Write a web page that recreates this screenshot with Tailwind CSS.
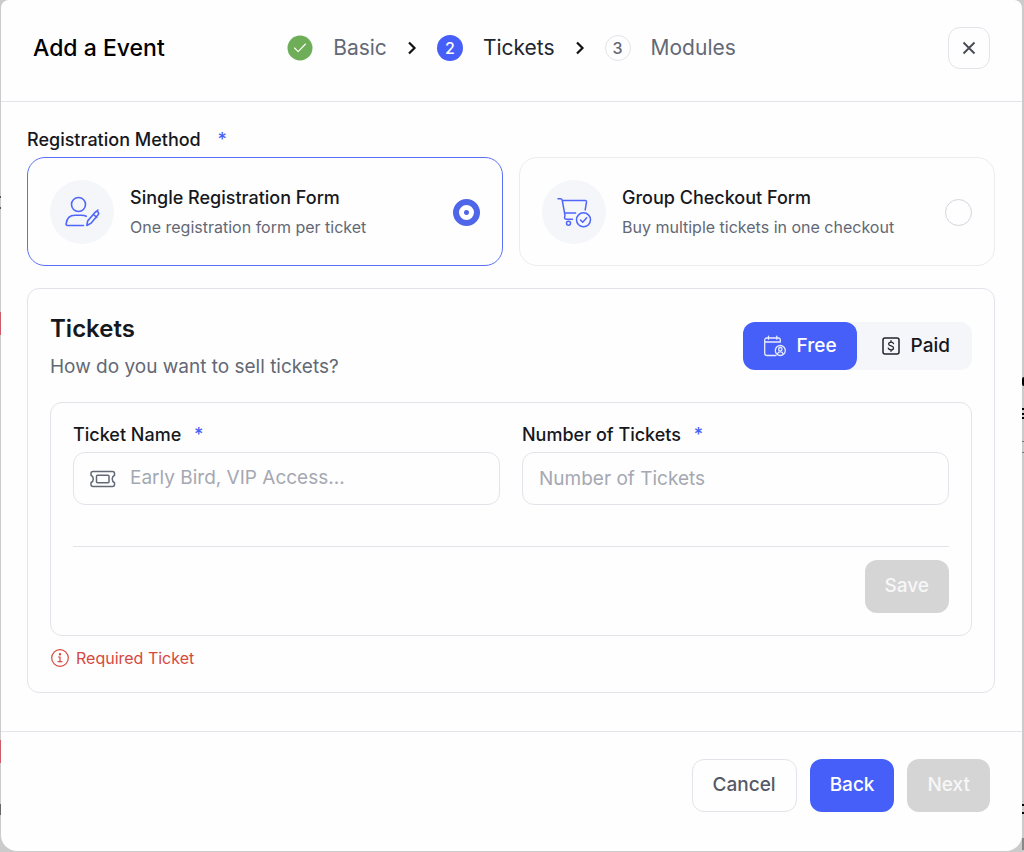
<!DOCTYPE html>
<html lang="en">
<head>
<meta charset="utf-8">
<meta name="viewport" content="width=device-width, initial-scale=1">
<title>Add a Event</title>
<script src="https://cdn.jsdelivr.net/npm/@tailwindcss/browser@4"></script>
</head>
<body class="relative flex min-h-screen flex-col overflow-x-hidden bg-[#cbcbcb] font-['Inter',sans-serif] text-[#16181d]">
<!-- Dimmed page behind the dialog -->
<div aria-hidden="true" class="absolute inset-y-0 left-0 w-px">
  <div class="absolute top-[312px] h-[23px] w-px bg-[#cf5b66]"></div>
  <div class="absolute top-[740px] h-[23px] w-px bg-[#cf5b66]"></div>
  <div class="absolute top-[196px] h-[2px] w-px bg-[#555]"></div>
  <div class="absolute top-[207px] h-[2px] w-px bg-[#555]"></div>
  <div class="absolute top-[804px] h-[11px] w-px bg-[#666]"></div>
</div>
<div aria-hidden="true" class="absolute inset-y-0 right-0 w-[2px]">
  <div class="absolute top-[377px] h-[9px] w-[2px] rounded-l-full bg-black"></div>
  <div class="absolute top-[408px] h-[2px] w-[2px] bg-black"></div>
  <div class="absolute top-[413px] h-[2px] w-[2px] bg-black"></div>
  <div class="absolute top-[417px] h-[2px] w-[2px] bg-black"></div>
  <div class="absolute top-[441px] h-px w-[2px] bg-[#777]"></div>
  <div class="absolute top-[452px] h-px w-[2px] bg-[#777]"></div>
  <div class="absolute top-[804px] h-[2px] w-[2px] bg-black"></div>
  <div class="absolute top-[812px] h-[2px] w-[2px] bg-black"></div>
  <div class="absolute top-[838px] h-[12px] w-[2px] bg-[#888]"></div>
</div>

<main role="dialog" aria-labelledby="dialog-title" class="relative mr-[2px] mb-px ml-px flex flex-1 flex-col rounded-t-lg rounded-b-2xl bg-[#fefefe]">
  <header class="grid grid-cols-[1fr_auto_1fr] items-center border-b border-[#e3e4ea] px-8 pt-[27px] pb-8">
    <h1 id="dialog-title" class="text-[23px] leading-8 font-medium text-black">Add a Event</h1>
    <ol class="flex items-center gap-5 text-[21px] leading-7 text-[#636875]">
      <li class="flex items-center gap-5">
        <svg class="size-[26px]" viewBox="0 0 26 26" fill="none"><circle cx="13" cy="13" r="12.5" fill="#6fae58"/><path d="M7.500 13l3.700 3.700 7.300-7.700" stroke="#fff" stroke-width="1.100" stroke-linecap="round" stroke-linejoin="round"/></svg>
        Basic
      </li>
      <li aria-hidden="true"><svg class="h-[14px] w-[10px]" viewBox="0 0 10 14" fill="none" stroke="#111" stroke-width="2.200"><path d="M2 1.500L7.500 7 2 12.500"/></svg></li>
      <li class="flex items-center gap-5 text-[#22252d]" aria-current="step">
        <span class="flex size-[26px] items-center justify-center rounded-full bg-[#465ff9] text-base font-medium text-white">2</span>
        Tickets
      </li>
      <li aria-hidden="true"><svg class="h-[14px] w-[10px]" viewBox="0 0 10 14" fill="none" stroke="#111" stroke-width="2.200"><path d="M2 1.500L7.500 7 2 12.500"/></svg></li>
      <li class="flex items-center gap-5">
        <span class="flex size-[26px] items-center justify-center rounded-full border border-[#e3e4ea] text-base font-medium">3</span>
        Modules
      </li>
    </ol>
    <button type="button" aria-label="Close" class="flex size-[42px] items-center justify-center justify-self-end rounded-xl border border-[#e3e4ea]">
      <svg class="size-[14px]" viewBox="0 0 14 14" fill="none" stroke="#4b4e57" stroke-width="2"><path d="M1.500 1.500l11 11M12.500 1.500l-11 11"/></svg>
    </button>
  </header>

  <form id="event-form" class="flex flex-col pt-6 pr-[27px] pb-[38px] pl-[26px]">
    <fieldset>
      <legend class="mb-[3px] text-lg leading-7 font-medium">Registration Method <span class="ml-3 text-[#465ff9]">*</span></legend>
      <div class="grid grid-cols-2 gap-4">
        <label class="flex items-center gap-4 rounded-[18px] border border-[#5b70f8] px-[22px] pt-[22px] pb-[21px]">
          <span class="flex size-16 shrink-0 items-center justify-center rounded-full bg-[#f5f6f9]">
            <svg class="size-9" viewBox="0 0 36 36" fill="none" stroke="#4f66f9" stroke-width="1.600" stroke-linecap="round" stroke-linejoin="round"><circle cx="14.500" cy="10.500" r="7"/><path d="M19.500 31.500H3.500c-1 0-1.500-.600-1.400-1.500C2.700 24.500 6 21.300 11 21.300h6.500c1.800 0 3.400.300 4.700 1"/><path d="M22.800 31.500l.9-4.600 7.500-8.600c.8-.9 1.900-1 2.700-.3.900.7.900 1.900.2 2.800l-7.300 8.600zM29.500 20.500l3.300 2.800M31.500 18l2.500-2"/></svg>
          </span>
          <span class="flex flex-1 flex-col">
            <span class="text-lg leading-[30px] font-medium">Single Registration Form</span>
            <span class="text-base leading-7 text-[#636875]">One registration form per ticket</span>
          </span>
          <input type="radio" name="method" checked class="size-[27px] appearance-none rounded-full border border-[#d3d5dc] checked:border-[6px] checked:border-[#4f66e8] checked:bg-[radial-gradient(circle,#4f66e8_2px,white_3px)]">
        </label>
        <label class="flex items-center gap-4 rounded-[18px] border border-[#ebecf0] px-[22px] pt-[22px] pb-[21px]">
          <span class="flex size-16 shrink-0 items-center justify-center rounded-full bg-[#f5f6f9]">
            <svg class="size-9" viewBox="0 0 36 36" fill="none" stroke="#4f66f9" stroke-width="1.500" stroke-linecap="round" stroke-linejoin="round"><path d="M2 4.700h2.300c1 0 1.700.500 1.900 1.500l2.700 14.600c.3 1.400-.4 2-.4 3 0 .900.700 1.400 1.800 1.400h6.200M6.500 6.500h22.800c.900 0 1.300.600 1.200 1.400l-1.300 8M8.700 19h11"/><circle cx="12.500" cy="29.200" r="2"/><circle cx="27.500" cy="25.800" r="7"/><path d="M24.500 26l2.200 2.300 4-4.600"/></svg>
          </span>
          <span class="flex flex-1 flex-col">
            <span class="text-lg leading-[30px] font-medium">Group Checkout Form</span>
            <span class="text-base leading-7 text-[#636875]">Buy multiple tickets in one checkout</span>
          </span>
          <input type="radio" name="method" class="size-[27px] appearance-none rounded-full border border-[#d3d5dc] checked:border-[6px] checked:border-[#4f66e8] checked:bg-[radial-gradient(circle,#4f66e8_2px,white_3px)]">
        </label>
      </div>
    </fieldset>

    <section class="mt-[22px] rounded-xl border border-[#e3e4ea] px-[22px] pt-[22px] pb-5">
      <div class="flex items-center justify-between">
        <div class="flex flex-col gap-[6px]">
          <h2 class="text-2xl leading-9 font-semibold">Tickets</h2>
          <p class="text-[19px] leading-7 text-[#636875]">How do you want to sell tickets?</p>
        </div>
        <div class="flex h-12 rounded-xl bg-[#f5f6f9] text-[19px] font-medium">
          <button type="button" aria-pressed="true" class="flex items-center gap-[10px] rounded-xl bg-[#465ff9] px-5 text-white">
            <svg class="size-6" viewBox="0 0 24 24" fill="none" stroke="#e9ecff" stroke-width="1.300" stroke-linecap="round" stroke-linejoin="round"><path d="M13 21.500H4A2.300 2.300 0 0 1 1.700 19.200V6A2 2 0 0 1 3.700 4h11.600a2 2 0 0 1 2 2v2H2M5.500 2.200v3M13.800 2.200v3"/><circle cx="17.300" cy="16.500" r="5"/><circle cx="17.300" cy="15.200" r="1.700"/><path d="M14.600 19.800c.3-1.300 1.300-1.900 2.700-1.900s2.400.6 2.700 1.900"/></svg>
            Free
          </button>
          <button type="button" aria-pressed="false" class="flex items-center gap-[10px] pr-[22px] pl-6">
            <svg class="size-5" viewBox="0 0 20 20" fill="none" stroke="#22252d" stroke-width="1.500" stroke-linecap="round" stroke-linejoin="round"><rect x="2" y="2" width="16" height="16" rx="2"/><path d="M12.500 7.600c-.3-.9-1.200-1.400-2.500-1.400-1.400 0-2.400.7-2.400 1.800 0 2.700 4.900 1.100 4.900 3.900 0 1.100-1 1.900-2.500 1.900-1.400 0-2.400-.6-2.700-1.600M10 4.700v1.500M10 13.800v1.500" stroke-width="1.300"/></svg>
            Paid
          </button>
        </div>
      </div>

      <div class="mt-[21px] rounded-xl border border-[#e3e4ea] px-[22px] pt-[18px] pb-[22px]">
        <div class="grid grid-cols-2 gap-[22px]">
          <div>
            <label for="ticket-name" class="mb-[3px] block text-lg leading-7 font-medium">Ticket Name <span class="ml-2 text-[#465ff9]">*</span></label>
            <div class="flex h-[53px] items-center gap-[14px] rounded-xl border border-[#e3e4ea] px-4">
              <svg class="h-5 w-[26px] shrink-0" viewBox="0 0 26 20" fill="none" stroke="#636875" stroke-width="1.500" stroke-linejoin="round"><path d="M3 2.500h19.500c1.200 0 2 .8 2 2v1.800c-1.600.7-2.300 2-2.300 3.700s.7 3 2.300 3.700v1.800c0 1.200-.8 2-2 2H3c-1.200 0-2-.8-2-2v-1.800C2.600 13 3.300 11.700 3.300 10S2.600 7 1 6.300V4.500c0-1.200.8-2 2-2z"/><rect x="6.500" y="6.200" width="12.500" height="7.600" rx="1"/></svg>
              <input id="ticket-name" type="text" placeholder="Early Bird, VIP Access..." class="min-w-0 flex-1 text-[19px] outline-none placeholder:text-[#a5a8b2]">
            </div>
          </div>
          <div>
            <label for="ticket-count" class="mb-[3px] block text-lg leading-7 font-medium">Number of Tickets <span class="ml-2 text-[#465ff9]">*</span></label>
            <input id="ticket-count" type="text" inputmode="numeric" placeholder="Number of Tickets" class="h-[53px] w-full rounded-xl border border-[#e3e4ea] px-4 text-[19px] outline-none placeholder:text-[#a5a8b2]">
          </div>
        </div>
        <div class="mt-[41px] flex justify-end border-t border-[#e3e4ea] pt-[13px]">
          <button type="button" disabled class="h-[53px] rounded-xl bg-[#d5d5d5] px-5 text-[19px] font-medium text-[#f7f7f8]">Save</button>
        </div>
      </div>

      <p class="mt-2 flex items-center gap-[6px] text-base leading-7 text-[#d5493f]" role="alert">
        <svg class="size-5" viewBox="0 0 20 20" fill="none" stroke="#d5493f" stroke-width="1.200" stroke-linecap="round"><circle cx="10" cy="10" r="8.300"/><path d="M8.400 9H10v4.500M8 13.700h4"/><circle cx="10" cy="6.300" r=".6" fill="#d5493f"/></svg>
        Required Ticket
      </p>
    </section>
  </form>

  <footer class="flex flex-1 items-start justify-end gap-[13px] border-t border-[#e3e4ea] px-8 pt-[27px] pb-[38px] text-[19px] font-medium">
    <button type="button" class="h-[53px] rounded-xl border border-[#e3e4ea] px-5 text-[#555965]">Cancel</button>
    <button type="button" class="h-[53px] rounded-xl bg-[#465ff9] px-5 text-white">Back</button>
    <button type="submit" form="event-form" disabled class="h-[53px] rounded-xl bg-[#d5d5d5] px-5 text-[#f7f7f8]">Next</button>
  </footer>
</main>
</body>
</html>
